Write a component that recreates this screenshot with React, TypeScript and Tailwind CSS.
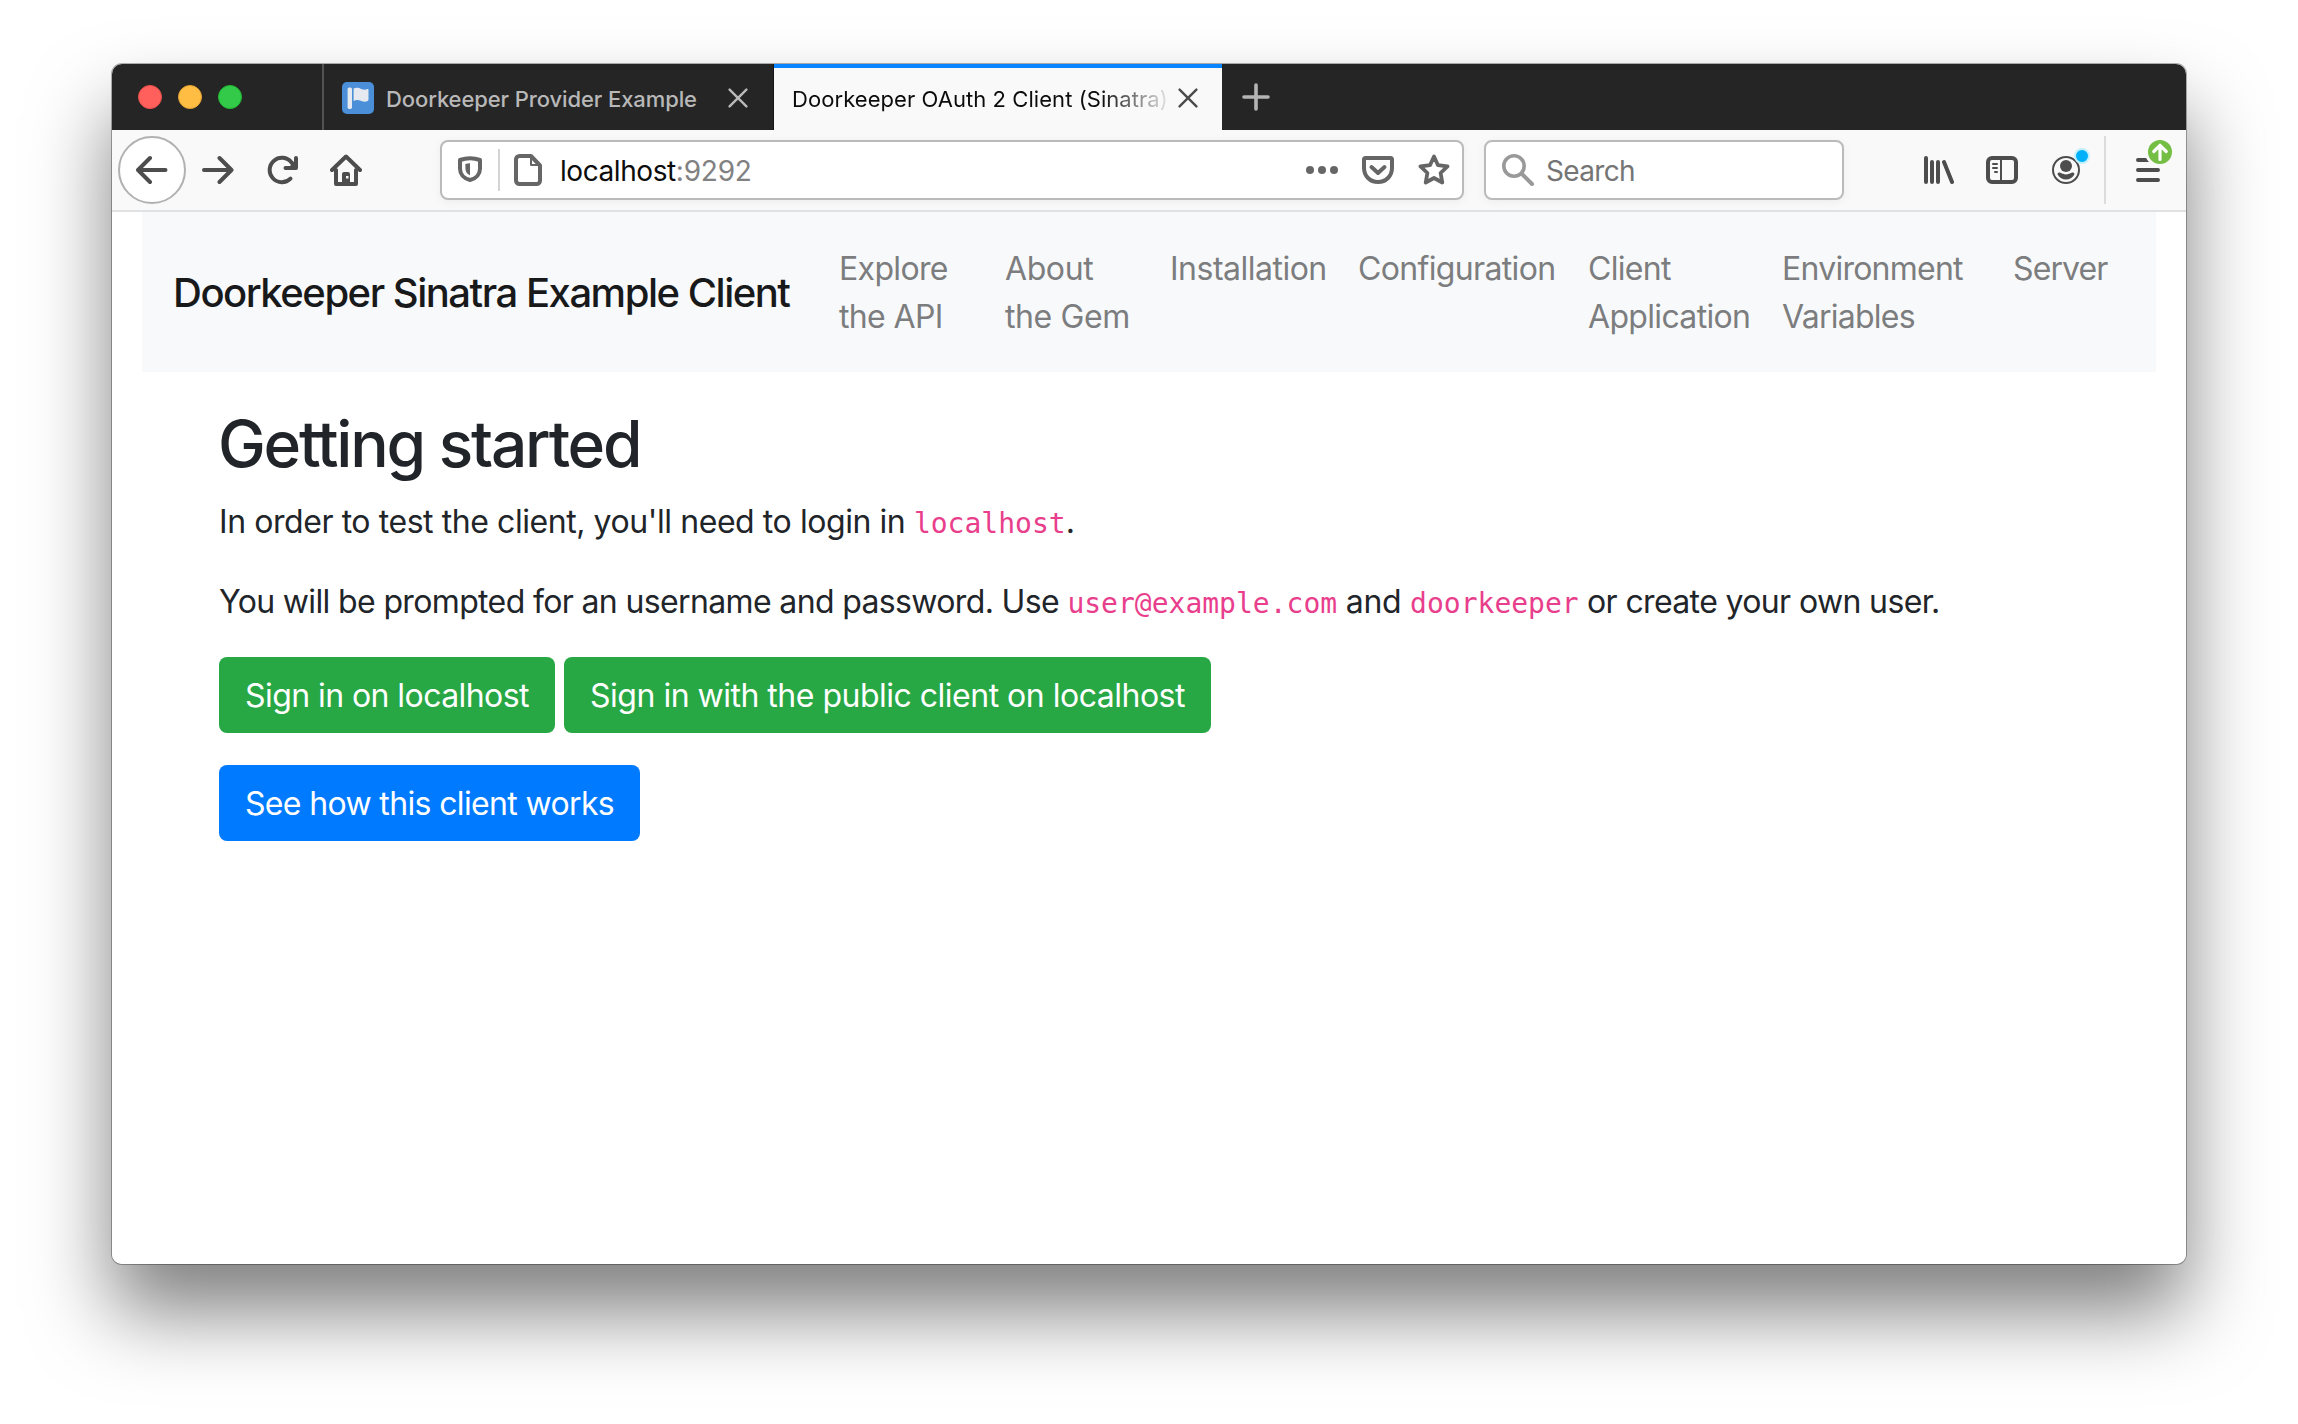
import type { ReactNode } from "react";

function Icon({ children, className = "" }: { children: ReactNode; className?: string }) {
  return (
    <svg
      viewBox="0 0 32 32"
      className={"size-8 shrink-0 " + className}
      fill="none"
      stroke="currentColor"
      strokeWidth={4}
      strokeLinecap="round"
      strokeLinejoin="round"
    >
      {children}
    </svg>
  );
}

function CloseIcon({ className }: { className: string }) {
  return (
    <svg viewBox="0 0 20 20" className={"size-5 shrink-0 " + className} fill="none" stroke="currentColor" strokeWidth={2.4} strokeLinecap="round">
      <path d="M1.6 1.6l16.8 16.8M18.4 1.6L1.6 18.4" />
    </svg>
  );
}

function TabBar() {
  return (
    <div className="flex h-[66px] bg-[#252525]">
      <div className="flex w-[212px] shrink-0 items-center gap-4 border-r-2 border-[#525252] pl-[26px]">
        <span className="size-6 rounded-full border border-[#ea4f4a] bg-[#ff605c]" />
        <span className="size-6 rounded-full border border-[#e3a233] bg-[#ffbd44]" />
        <span className="size-6 rounded-full border border-[#20b833] bg-[#34ca49]" />
      </div>
      <div className="flex w-[450px] shrink-0 items-center border-r border-[#151515] pt-0.5 pl-[18px]">
        <svg viewBox="0 0 32 32" className="size-8 shrink-0">
          <rect width="32" height="32" rx="5" fill="#4a8fd8" />
          <rect x="5.6" y="5.5" width="4.4" height="21.4" rx="1.6" fill="#e6eaf0" />
          <path
            d="M11.6 6.6c3-1.4 5.400-.5 7.600.4 2.400.9 4.400.9 6.200.1.700-.3 1.100 0 1.100.7v10c0 .6-.3 1-.9 1.300-2.200 1-4.600.6-6.800-.4-2.300-1-4.600-1.100-7.200.2z"
            fill="#e6eaf0"
          />
        </svg>
        <span className="ml-3 pt-0.5 text-[22px] leading-8 font-medium tracking-[-0.1px] whitespace-nowrap text-[#b8b8b8]">
          Doorkeeper Provider Example
        </span>
        <CloseIcon className="ml-[31px] text-[#b8b8b8]" />
      </div>
      <div className="flex w-[448px] shrink-0 items-center border-t-4 border-[#0a84ff] bg-[#f9f9fa] pl-[18px]">
        <span className="w-[377px] shrink-0 overflow-hidden bg-[linear-gradient(90deg,#0c0c0d_82%,#0c0c0d10_100%)] bg-clip-text text-[22px] leading-8 tracking-[0.06px] whitespace-nowrap text-transparent">
          Doorkeeper OAuth 2 Client (Sinatra)
        </span>
        <CloseIcon className="-mt-0.5 ml-[9px] text-[#4c4c4d]" />
      </div>
      <Icon className="mt-[17px] ml-[18px] text-[#b4b4b4]">
        <path d="M16 4v24M4 16h24" strokeWidth={3.6} />
      </Icon>
    </div>
  );
}

function UrlBar() {
  return (
    <div className="ml-[78px] flex h-[60px] w-[1024px] shrink-0 items-center rounded-lg border-2 border-[#bababa] bg-white text-[#666] shadow-[0_2px_10px_rgba(0,0,0,0.05)]">
      <Icon className="ml-3">
        <path d="M16 4.200c3.600 0 7 .7 10 1.800v8.500c0 5.500-3.500 10-10 11.500-6.500-1.500-10-6-10-11.500V6c3-1.100 6.400-1.800 10-1.800z" />
        <path d="M16 9.300v12c-3.300-1.300-4.600-4-4.600-7.300v-4c1.500-.4 3-.7 4.600-.7z" fill="currentColor" stroke="none" />
      </Icon>
      <span className="ml-3 h-[42px] w-0.5 bg-[#d4d4d4]" />
      <Icon className="ml-3">
        <path d="M7.500 2H19l9 9.500v15a3.500 3.500 0 0 1-3.500 3.500h-17A3.500 3.500 0 0 1 4 26.500v-21A3.500 3.500 0 0 1 7.500 2z" />
        <path d="M19 2.500V11h8.500" strokeWidth={2} />
      </Icon>
      <span className="ml-4 pt-0.5 text-[28px] leading-10 whitespace-nowrap">
        <span className="tracking-[-0.43px] text-[#0c0c0d]">localhost</span>
        <span className="tracking-[-0.2px] text-[#818182]">:9292</span>
      </span>
      <Icon className="ml-auto">
        <g fill="currentColor" stroke="none">
          <circle cx="4" cy="16" r="4" />
          <circle cx="16" cy="16" r="4" />
          <circle cx="28" cy="16" r="4" />
        </g>
      </Icon>
      <Icon className="ml-6">
        <path d="M3.500 4h25a1.500 1.500 0 0 1 1.500 1.500V14c0 8-6 14-14 14S2 22 2 14V5.500A1.500 1.500 0 0 1 3.500 4z" />
        <path d="M9.500 13l6.500 6 6.500-6" />
      </Icon>
      <Icon className="mr-3 ml-6">
        <path d="M16 2.500l4 8.700 9.500 1.200-6.900 6.600 1.700 9.500L16 24l-8.300 4.500L9.400 19l-6.900-6.600 9.500-1.200z" strokeWidth={3.800} />
      </Icon>
    </div>
  );
}

function Toolbar() {
  return (
    <div className="flex h-[82px] items-center border-b-2 border-[#e0e1e2] bg-[#f9f9fa] text-[#4d4d4e]">
      <div className="ml-1.5 flex size-[68px] shrink-0 items-center justify-center rounded-full border-2 border-[#b1b1b1] bg-white">
        <Icon>
          <path d="M29.500 16H3M14 4L2 16l12 12" />
        </Icon>
      </div>
      <Icon className="ml-4">
        <path d="M2 16h27M17.500 4l12 12-12 12" />
      </Icon>
      <Icon className="ml-8">
        <path d="M24.500 24.600A12.200 12.200 0 1 1 25.500 8.500L28 11" />
        <path d="M30 4v10H19.500" />
        <path d="M24 12l6-6v8h-7z" fill="currentColor" stroke="none" />
      </Icon>
      <Icon className="ml-8">
        <path d="M2 16L16 2.500 30 16M6 16v14h20V16" />
        <path d="M12 30V20a2 2 0 0 1 2-2h4a2 2 0 0 1 2 2v10z" fill="currentColor" stroke="none" />
        <rect x="16" y="22" width="2.500" height="2.500" fill="#f9f9fa" stroke="none" />
      </Icon>
      <UrlBar />
      <div className="ml-5 flex h-[60px] w-[360px] shrink-0 items-center rounded-lg border-2 border-[#bababa] bg-white shadow-[0_2px_10px_rgba(0,0,0,0.05)]">
        <Icon className="ml-4 text-[#999]">
          <circle cx="12" cy="12" r="10.200" strokeWidth={3.600} />
          <path d="M20 20l10 10" />
        </Icon>
        <span className="ml-3 pt-0.5 text-[28px] leading-10 tracking-[-0.67px] text-[#757575]">Search</span>
      </div>
      <Icon className="ml-[78px]">
        <path d="M4 4v24M10 8v20M16 8v20M22 8l8 20" />
      </Icon>
      <Icon className="ml-8">
        <rect x="2" y="4" width="28" height="24" rx="4" />
        <path d="M15 4v24" strokeWidth={2} />
        <path d="M7 10h4M7 14h4M9 18h2" strokeWidth={2} />
      </Icon>
      <div className="relative ml-8 size-8 shrink-0">
        <Icon>
          <circle cx="16" cy="16" r="13" strokeWidth={2} />
          <circle cx="16" cy="12" r="6" fill="currentColor" stroke="none" />
          <path d="M10 18.600c3.500 2.400 8.500 2.400 12 0 1.600-.8 3 .9 2.200 2.200-3.200 6.300-13.200 6.300-16.400 0-.8-1.300.6-3 2.200-2.200z" fill="currentColor" stroke="none" />
        </Icon>
        <span className="absolute -top-1.5 left-6 size-4 rounded-full border-2 border-[#c3effd] bg-[#00b0f8]" />
      </div>
      <span className="ml-[22px] h-[68px] w-0.5 shrink-0 bg-[#dcdcdd]" />
      <div className="relative ml-[26px] size-8 shrink-0">
        <Icon>
          <path d="M6 6h20M6 16h20M6 26h20" />
        </Icon>
        <svg viewBox="0 0 30 30" className="absolute -top-[17px] left-[13px] size-[30px]" fill="none">
          <circle cx="15" cy="15" r="15" fill="#f9f9fa" />
          <circle cx="15" cy="15" r="12" fill="#73be43" />
          <path d="M15 22.500V8.500M8.800 14.500L15 8.300l6.200 6.200" stroke="#fff" strokeWidth={3.200} strokeLinecap="round" strokeLinejoin="round" />
        </svg>
      </div>
    </div>
  );
}

function NavItem({ className, children }: { className: string; children: ReactNode }) {
  return <a className={"shrink-0 pt-[17px] pb-[15px] text-[#7c7d7e] " + className}>{children}</a>;
}

function Code({ children }: { children: ReactNode }) {
  return <code className="font-['DejaVu_Sans_Mono',monospace] text-[28px] tracking-normal text-[#e83e8c]">{children}</code>;
}

export default function App() {
  return (
    <div className="h-[1424px] w-[2298px] overflow-hidden bg-white pt-16 pl-28 font-['Inter',sans-serif]">
      <div className="w-[2074px] rounded-[10px] shadow-[0_0_0_1px_rgba(0,0,0,0.3),0_48px_80px_rgba(0,0,0,0.5)]">
        <div className="h-[1200px] overflow-hidden rounded-[10px] bg-white">
          <TabBar />
          <Toolbar />
          <nav className="mr-[30px] ml-[30px] flex h-40 items-center bg-[#f8f9fb] pl-[31px] text-[32px] leading-[48px] tracking-[-0.6px]">
            <span className="w-[666px] shrink-0 pt-0.5 text-[40px] leading-[60px] font-medium tracking-[-1.48px] whitespace-nowrap text-[#18191a]">
              Doorkeeper Sinatra Example Client
            </span>
            <div className="flex items-start">
              <NavItem className="w-[166px] tracking-[-0.65px]">Explore<br />the API</NavItem>
              <NavItem className="w-[165px] tracking-[-0.4px]">About<br />the Gem</NavItem>
              <NavItem className="w-[188px] tracking-[-0.5px]">Installation</NavItem>
              <NavItem className="w-[230px] tracking-[-0.65px]">Configuration</NavItem>
              <NavItem className="w-[194px] tracking-[-0.67px]">Client<br />Application</NavItem>
              <NavItem className="w-[231px] tracking-[-0.75px]">Environment<br />Variables</NavItem>
              <NavItem className="tracking-[-0.9px]">Server</NavItem>
            </div>
          </nav>
          <main className="pt-8 pl-[107px] text-[32px] leading-[48px] tracking-[-0.6px] text-[#212529]">
            <h1 className="mb-[14px] -ml-px pt-0.5 text-[64px] leading-[76.800px] font-medium tracking-[-2.220px]">Getting started</h1>
            <p className="mb-8 h-12 pt-px whitespace-nowrap">
              <span className="tracking-[-0.43px]">In order to test the client, you'll need to login in </span>
              <Code>localhost</Code>.
            </p>
            <p className="mb-8 h-12 pt-px whitespace-nowrap">
              <span className="tracking-[-0.64px]">You will be prompted for an username and password. Use </span>
              <Code>user@example.com</Code>
              <span className="tracking-[-0.3px]"> and </span>
              <Code>doorkeeper</Code>
              <span className="tracking-[-0.630px]"> or create your own user.</span>
            </p>
            <div className="mb-8 flex gap-[9px] text-white">
              <button className="h-[76px] w-[336px] rounded-lg bg-[#28a745] pt-0.5 tracking-[-0.57px] whitespace-nowrap">Sign in on localhost</button>
              <button className="h-[76px] w-[647px] rounded-lg bg-[#28a745] pt-0.5 tracking-[-0.5px] whitespace-nowrap">
                Sign in with the public client on localhost
              </button>
            </div>
            <button className="h-[76px] w-[421px] rounded-lg bg-[#007bff] pt-0.5 tracking-[-0.64px] whitespace-nowrap text-white">
              See how this client works
            </button>
          </main>
        </div>
      </div>
    </div>
  );
}
